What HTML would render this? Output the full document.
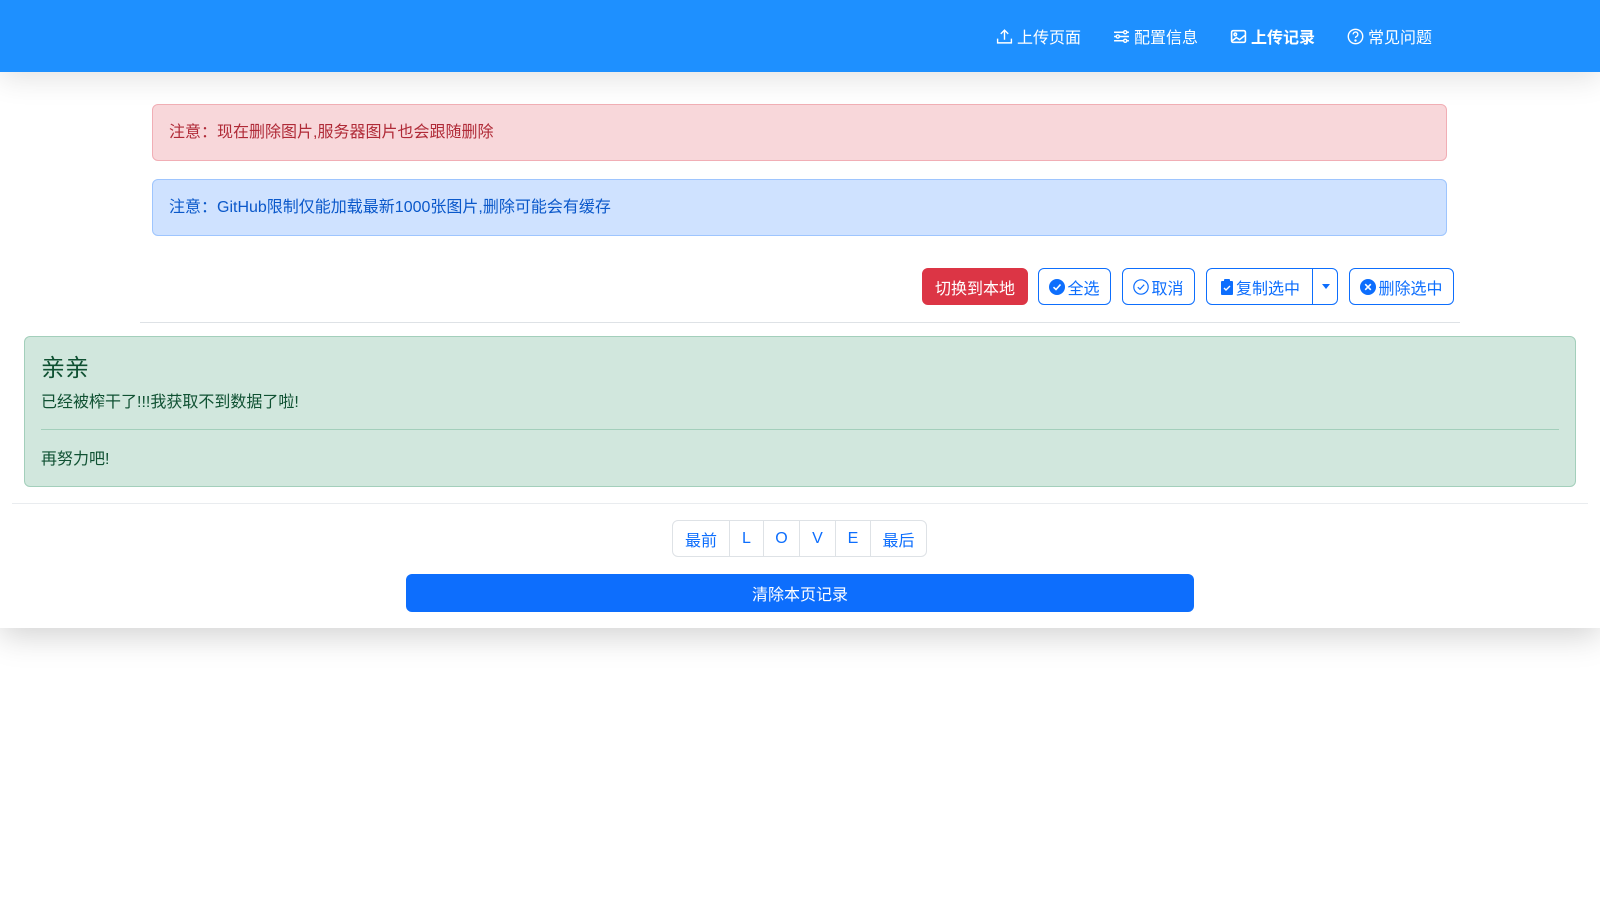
<!DOCTYPE html>
<html><head><meta charset="utf-8"><style>
*{box-sizing:border-box;margin:0;padding:0}
body{width:1600px;height:900px;background:#fff;font-family:"Liberation Sans","Noto Sans CJK SC",sans-serif;font-size:16px;position:relative;overflow:hidden}
.nav{position:absolute;left:0;top:0;width:1600px;height:72px;background:#1e90ff;z-index:2;box-shadow:0 6px 30px rgba(0,0,0,.12)}
.nav a{position:absolute;top:24px;color:#fff;font-size:16px;display:flex;align-items:center;gap:4px;text-decoration:none}
.card{position:absolute;left:0;top:72px;width:1600px;height:556px;background:#fff;box-shadow:0 8px 30px rgba(0,0,0,.18)}
.alert{position:absolute;left:152px;width:1295px;height:57px;border-radius:6px;padding:0 16px;line-height:55px;font-size:16px}
.btn{position:absolute;top:268px;height:37px;border:1px solid #0d6efd;border-radius:6px;color:#0d6efd;font-size:16px;display:flex;align-items:center;justify-content:center;gap:2px;background:#fff}
.pg{position:absolute;top:520px;height:37px;border:1px solid #dee2e6;color:#0d6efd;display:flex;align-items:center;justify-content:center;font-size:16px}
</style></head><body>
<div class="nav">
<a style="left:996px"><svg width="17" height="17" viewBox="0 0 16 16" fill="none" stroke="#fff" stroke-width="1.3"><path d="M8 11V2M4.5 5.5 8 2l3.5 3.5M1.5 10v4h13v-4"/></svg>上传页面</a>
<a style="left:1113px"><svg width="17" height="17" viewBox="0 0 16 16" fill="none" stroke="#fff" stroke-width="1.3"><path d="M1 4h9M13 4h2M1 8h2M6 8h9M1 12h9M13 12h2"/><circle cx="11.5" cy="4" r="1.5"/><circle cx="4.5" cy="8" r="1.5"/><circle cx="11.5" cy="12" r="1.5"/></svg>配置信息</a>
<a style="left:1230px;font-weight:bold"><svg width="17" height="17" viewBox="0 0 16 16" fill="none" stroke="#fff" stroke-width="1.5"><rect x="1.5" y="2.5" width="13" height="11" rx="1.5"/><circle cx="5" cy="6" r="1.2"/><path d="M2 12l4-3 3 2 5-4" /></svg>上传记录</a>
<a style="left:1347px"><svg width="17" height="17" viewBox="0 0 16 16" fill="none" stroke="#fff" stroke-width="1.3"><circle cx="8" cy="8" r="6.8"/><path d="M5.8 6a2.2 2.2 0 1 1 3 2c-.6.3-.8.7-.8 1.4"/><circle cx="8" cy="11.8" r=".5" fill="#fff"/></svg>常见问题</a>
</div>
<div class="card">
<div class="alert" style="top:32px;background:#f8d7da;border:1px solid #f1aeb5;color:#b02a37">注意：现在删除图片,服务器图片也会跟随删除</div>
<div class="alert" style="top:107px;background:#cfe2ff;border:1px solid #9ec5fe;color:#0a58ca">注意：GitHub限制仅能加载最新1000张图片,删除可能会有缓存</div>
</div>
<div class="btn" style="left:922px;width:106px;background:#dc3545;border-color:#dc3545;color:#fff">切换到本地</div>
<div class="btn" style="left:1038px;width:73px"><svg width="16" height="16" viewBox="0 0 16 16"><circle cx="8" cy="8" r="8" fill="#0d6efd"/><path d="M4.5 8.2 7 10.5l4.5-5" stroke="#fff" stroke-width="1.6" fill="none"/></svg>全选</div>
<div class="btn" style="left:1122px;width:73px"><svg width="16" height="16" viewBox="0 0 16 16"><circle cx="8" cy="8" r="7.2" fill="none" stroke="#0d6efd" stroke-width="1.2"/><path d="M4.8 8.2 7 10.3l4.2-4.6" stroke="#0d6efd" stroke-width="1.2" fill="none"/></svg>取消</div>
<div class="btn" style="left:1206px;width:132px;justify-content:flex-start;padding-left:13px"><svg width="14" height="16" viewBox="0 0 14 16"><rect x="1" y="2" width="12" height="14" rx="1" fill="#0d6efd"/><rect x="4" y="0" width="6" height="3" rx="1" fill="#0d6efd"/><path d="M4 9l2 2 4-4" stroke="#fff" stroke-width="1.4" fill="none"/></svg>复制选中<span style="position:absolute;left:105px;top:0;bottom:0;border-left:1px solid #0d6efd;width:26px;display:flex;align-items:center;justify-content:center"><span style="border-top:5px solid #0d6efd;border-left:4px solid transparent;border-right:4px solid transparent"></span></span></div>
<div class="btn" style="left:1349px;width:105px"><svg width="16" height="16" viewBox="0 0 16 16"><circle cx="8" cy="8" r="8" fill="#0d6efd"/><path d="M5.2 5.2l5.6 5.6M10.8 5.2l-5.6 5.6" stroke="#fff" stroke-width="1.6"/></svg>删除选中</div>
<div style="position:absolute;left:140px;top:322px;width:1320px;border-top:1px solid #dee2e6"></div>
<div style="position:absolute;left:24px;top:336px;width:1552px;height:151px;background:#d1e7dd;border:1px solid #a3cfbb;border-radius:6px;color:#0f5132;padding:0 16px">
<div style="font-size:24px;position:absolute;top:11px">亲亲</div>
<div style="font-size:16px;position:absolute;top:51px">已经被榨干了!!!我获取不到数据了啦!</div>
<div style="position:absolute;left:16px;right:16px;top:92px;border-top:1px solid #a3cfbb"></div>
<div style="font-size:16px;position:absolute;top:108px">再努力吧!</div>
</div>
<div style="position:absolute;left:12px;top:503px;width:1576px;border-top:1px solid #e9ecef"></div>
<div class="pg" style="left:672px;width:58px;border-radius:6px 0 0 6px">最前</div>
<div class="pg" style="left:729px;width:35px">L</div>
<div class="pg" style="left:763px;width:37px">O</div>
<div class="pg" style="left:799px;width:37px">V</div>
<div class="pg" style="left:835px;width:36px">E</div>
<div class="pg" style="left:870px;width:57px;border-radius:0 6px 6px 0">最后</div>
<div style="position:absolute;left:406px;top:574px;width:788px;height:38px;background:#0d6efd;border-radius:6px;color:#fff;display:flex;align-items:center;justify-content:center;font-size:16px">清除本页记录</div>
</body></html>
